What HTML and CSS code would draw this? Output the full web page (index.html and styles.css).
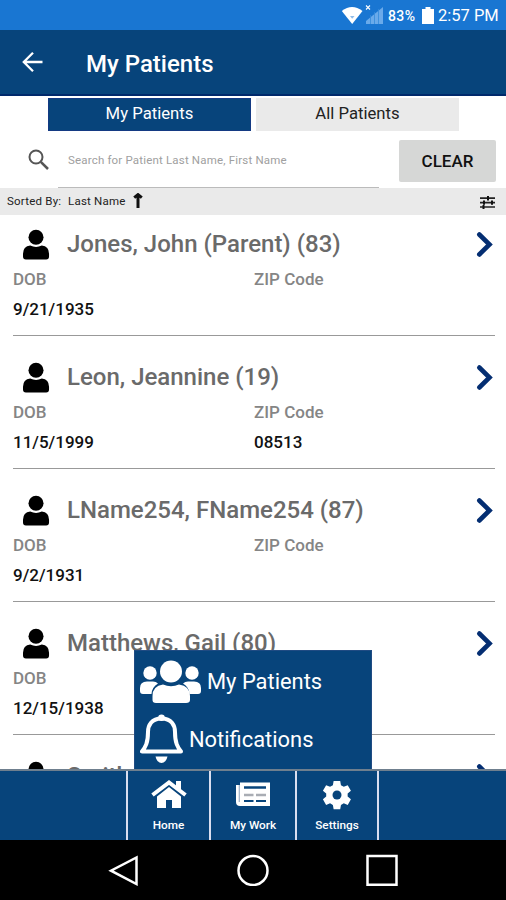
FILE: index.html
```html
<!DOCTYPE html>
<html lang="en">
<head>
<meta charset="utf-8">
<title>My Patients</title>
<link rel="stylesheet" href="styles.css">
</head>
<body>
<svg class="defs" aria-hidden="true">
  <symbol id="person" viewBox="0 0 28 31"><circle cx="13.5" cy="8" r="7.8"/><path d="M7.5 16.5Q13.5 19.5 19.5 16.5Q27 17.500 27 25V28Q27 31 24 31H3Q0 31 0 28V25Q0 17.500 7.500 16.500Z"/></symbol>
  <symbol id="chevron" viewBox="0 0 18 28"><path d="M3.300 3.500L13.500 13.500L3.300 23.500" fill="none" stroke="#042e72" stroke-width="4.600" stroke-linecap="round"/></symbol>
</svg>
<div class="screen">
  <div class="status">
    <svg class="signals" viewBox="0 0 46 22"><path d="M.8 6Q11 -2 21.500 6L11.200 19Z" fill="#fff"/><path d="M9 11h4.500l-2.300 2.800z" fill="#8fbce9"/><path d="M25 .5l4 4m0-4l-4 4" stroke="#fff" stroke-width="1.100"/><path d="M25 19v-3l17-14v17z" fill="#6aaaea"/><path d="M29.500 10v9m4-12v12m4-15v15" stroke="#358adb" stroke-width=".8"/></svg>
    <span class="percent">83%</span>
    <svg class="battery" viewBox="0 0 12 17"><path d="M3.500 0h5v2H12v15H0V2h3.500z" fill="#fff"/></svg>
    <span class="clock">2:57 PM</span>
  </div>
  <header class="header">
    <svg class="back" viewBox="0 0 22 22"><path d="M20.500 11H2M11 1.800L1.800 11l9.200 9.200" fill="none" stroke="#fff" stroke-width="2.300"/></svg>
    <h1>My Patients</h1>
  </header>
  <div class="tabs"><div class="tab active"><span>My Patients</span></div><div class="tab"><span>All Patients</span></div></div>
  <div class="search">
    <svg class="glass" viewBox="0 0 22 22"><circle cx="8" cy="8" r="6.500" fill="none" stroke="#555" stroke-width="2"/><path d="M12.800 12.800l7.200 7.200" stroke="#555" stroke-width="2.500"/></svg>
    <div class="field"><span>Search for Patient Last Name, First Name</span></div>
    <div class="clear"><span>CLEAR</span></div>
  </div>
  <div class="sort">
    <span class="sorted">Sorted By:</span><span class="sort-name">Last Name</span>
    <svg class="up" viewBox="0 0 10 15"><path d="M5 15V3M1.200 4.600L5 1.600l3.800 3" fill="none" stroke="#111" stroke-width="3"/></svg>
    <svg class="tune" viewBox="0 0 15 13"><path d="M0 2.200h15M0 6.600h15M0 11h15" stroke="#222" stroke-width="1.700"/><path d="M8 0v4.400M4 4.500v4.300M12 4.500v4.300M3.500 9v4" stroke="#111" stroke-width="2"/></svg>
  </div>
  <main class="list">
    <article class="patient"><div class="top"><svg class="person"><use href="#person"/></svg><h2>Jones, John (Parent) (83)</h2><svg class="chevron"><use href="#chevron"/></svg></div><div class="fields labels"><span>DOB</span><span>ZIP Code</span></div><div class="fields values"><span>9/21/1935</span><span></span></div></article>
    <article class="patient"><div class="top"><svg class="person"><use href="#person"/></svg><h2>Leon, Jeannine (19)</h2><svg class="chevron"><use href="#chevron"/></svg></div><div class="fields labels"><span>DOB</span><span>ZIP Code</span></div><div class="fields values"><span>11/5/1999</span><span>08513</span></div></article>
    <article class="patient"><div class="top"><svg class="person"><use href="#person"/></svg><h2>LName254, FName254 (87)</h2><svg class="chevron"><use href="#chevron"/></svg></div><div class="fields labels"><span>DOB</span><span>ZIP Code</span></div><div class="fields values"><span>9/2/1931</span><span></span></div></article>
    <article class="patient"><div class="top"><svg class="person"><use href="#person"/></svg><h2>Matthews, Gail (80)</h2><svg class="chevron"><use href="#chevron"/></svg></div><div class="fields labels"><span>DOB</span><span></span></div><div class="fields values"><span>12/15/1938</span><span></span></div></article>
    <article class="patient"><div class="top"><svg class="person"><use href="#person"/></svg><h2>Smith,</h2><svg class="chevron"><use href="#chevron"/></svg></div></article>
    <div class="menu">
      <div class="menu-item"><svg class="group" viewBox="0 0 62 44" fill="#fff"><circle cx="10" cy="13" r="6.700"/><circle cx="52" cy="13" r="6.700"/><path d="M0 31V28Q0 21.500 7 21.500H13Q16 21.500 18 23.500Q12 27 11.500 34H3Q0 34 0 31ZM61 31V28Q61 21.500 54 21.500H48Q45 21.500 43 23.500Q49 27 49.500 34H58Q61 34 61 31Z"/><circle cx="31" cy="11.500" r="11"/><path d="M23 24.500Q31 28 39 24.500Q50 26 50 36V40Q50 43 46 43H16Q12.500 43 12.500 40V36Q12.500 26 23 24.500Z"/></svg><span>My Patients</span></div>
      <div class="menu-item"><svg class="bell" viewBox="0 0 44 50"><path d="M21.500 4.500C11.500 4.500 8 11.500 8 18C8 29 5.500 33 2 37.500H41C37.500 33 35 29 35 18C35 11.500 31.500 4.500 21.500 4.500Z" fill="none" stroke="#fff" stroke-width="4" stroke-linejoin="round"/><circle cx="21.500" cy="3.800" r="3.300" fill="#fff"/><path d="M15.500 42.500H27.500Q26 49 21.500 49T15.500 42.500Z" fill="#fff"/></svg><span>Notifications</span></div>
    </div>
  </main>
  <nav class="bottom">
    <div class="side"></div>
    <div class="item home"><svg viewBox="0 0 36 30"><path d="M1.500 15L18 2.500L34.500 15" fill="none" stroke="#fff" stroke-width="4"/><path d="M25 1h5v11l-5-4zM6 16.500L18 7l12 9.500V28H21v-8h-6v8H6z" fill="#fff"/></svg><span>Home</span></div>
    <div class="item work"><svg viewBox="0 0 36 30"><path d="M5 2.500H35V26H5Q1 26 1 22V5H5z" fill="#fff"/><path d="M4.300 5V22" stroke="#9dafc7" stroke-width="1.200"/><path d="M9 7.500H31" stroke="#07447b" stroke-width="2.500"/><path d="M9 15H18.500M21 15H31" stroke="#a9adb4" stroke-width="2.500"/><path d="M9 21H18.500M21 21H31" stroke="#07447b" stroke-width="2"/></svg><span>My Work</span></div>
    <div class="item settings"><svg viewBox="0 0 36 30"><path d="M14.500 0h7l.8 4.500 3 1.700 4.200-1.600 3.400 5.900-3.500 2.900v3.200l3.500 2.900-3.400 5.900-4.200-1.600-3 1.700-.8 4.500h-7l-.8-4.500-3-1.700-4.200 1.600-3.400-5.900 3.500-2.900v-3.200l-3.500-2.900 3.400-5.900 4.200 1.600 3-1.700z" fill="#fff" transform="translate(1 1) scale(.94)"/><circle cx="18" cy="15" r="4.500" fill="#07447b"/></svg><span>Settings</span></div>
    <div class="side"></div>
  </nav>
  <div class="system">
    <svg viewBox="0 0 32 32"><path d="M28.500 3.500V30L3 16.700Z"/></svg><svg viewBox="0 0 32 32"><circle cx="16" cy="16.500" r="14.500"/></svg><svg viewBox="0 0 32 32"><path d="M1.500 2H30.500V30.700H1.500Z"/></svg>
  </div>
</div>
</body>
</html>
```

FILE: styles.css
```css
* { box-sizing: border-box; }
body { margin: 0; font-family: Roboto, "Liberation Sans", sans-serif; background: #fff; }
h1, h2 { margin: 0; font-weight: 500; white-space: nowrap; }
svg { display: block; flex: none; }
span { white-space: nowrap; }
.defs { display: none; }
.screen { width: 506px; height: 900px; overflow: hidden; display: flex; flex-direction: column; }
.screen > * { flex: none; }
.status { height: 30px; background: #1976d2; color: #fff; display: flex; align-items: center; padding: 1px 0 0 341px; }
.signals { width: 46px; height: 22px; }
.percent { width: 35px; font-size: 14px; font-weight: 500; padding-left: 1px; letter-spacing: .4px; }
.battery { width: 12px; height: 17px; margin-right: 4px; }
.clock { font-size: 16.500px; }
.header { height: 66px; background: #07447b; border-bottom: 2px solid #00296b; color: #fff; display: flex; align-items: center; padding: 1px 0 0 22px; }
.back { width: 22px; height: 22px; margin-right: 42px; margin-top: -1px; }
.header h1 { font-size: 24px; margin-top: 2px; }
.tabs { height: 35px; padding: 2px 47px 0 48px; display: grid; grid-template-columns: 203px 203px; gap: 5px; }
.tab { background: #eaeaea; text-align: center; font-size: 16.700px; line-height: 31px; color: #222; }
.tab.active { background: #07447b; color: #fff; border: 1px solid #143a83; line-height: 29px; }
.search { height: 57px; display: flex; padding-left: 28px; }
.glass { width: 22px; height: 22px; margin: 18px 8px 0 0; }
.field { width: 321px; border-bottom: 1px solid #bbb; padding: 21px 0 0 10px; font-size: 11.500px; letter-spacing: .18px; line-height: 16px; color: #a0a0a0; }
.clear { width: 97px; height: 42px; margin: 9px 0 0 20px; border-radius: 2px; background: #d6d7d6; text-align: center; line-height: 43px; font-size: 17px; font-weight: 500; color: #111; }
.sort { height: 27px; background: #eaeaea; display: flex; align-items: center; padding: 0 11px 2px 7px; font-size: 11.500px; letter-spacing: .22px; color: #222; }
.sorted { width: 61px; }
.sort-name { width: 65px; }
.up { width: 10px; height: 15px; }
.tune { width: 15px; height: 13px; margin: 3px 0 0 auto; }
.list { height: 554px; position: relative; overflow: hidden; }
.patient { height: 133px; margin: 0 11px 0 13px; padding-top: 13px; }
.patient::after { content: ""; display: block; height: 1px; background: #999; margin-top: 16px; }
.top { height: 33px; display: flex; align-items: center; padding-left: 10px; }
.person { width: 27px; height: 31px; margin: -1px 17px 0 0; }
.top h2 { font-size: 24px; color: #6a6a6a; line-height: 33px; }
.chevron { width: 18px; height: 28px; margin: 1px 1px 0 auto; }
.fields { display: grid; grid-template-columns: 241px 1fr; font-size: 17px; }
.labels { height: 30px; line-height: 36px; color: #858585; font-weight: 500; }
.values { height: 28px; line-height: 37px; font-weight: 500; color: #111; }
.menu { position: absolute; left: 134px; top: 435px; width: 238px; height: 119px; background: #07447b; border: 1px solid #204b83; border-bottom: 0; color: #fff; padding: 8px 0 0 5px; font-size: 21.900px; }
.menu-item { display: flex; align-items: center; height: 45px; }
.menu-item + .menu-item { height: 50px; margin-top: 10px; }
.group { width: 62px; height: 44px; margin-right: 5px; }
.bell { width: 44px; height: 50px; margin-right: 5px; }
.bottom { height: 71px; border-top: 2px solid #6f7f8e; display: grid; grid-template-columns: 126px 83px 86px 84px 127px; background: #07447b; color: #fff; }
.item { border-left: 2px solid #d9def0; display: flex; flex-direction: column; align-items: center; padding-top: 9px; font-size: 11.800px; font-weight: 500; }
.item svg { width: 36px; height: 30px; margin-bottom: 8px; }
.settings { border-right: 2px solid #d9def0; }
.system { height: 60px; background: #000; display: flex; padding: 14px 108px 0; justify-content: space-between; }
.system svg { width: 32px; height: 32px; fill: none; stroke: #fff; stroke-width: 2.500; }
```
